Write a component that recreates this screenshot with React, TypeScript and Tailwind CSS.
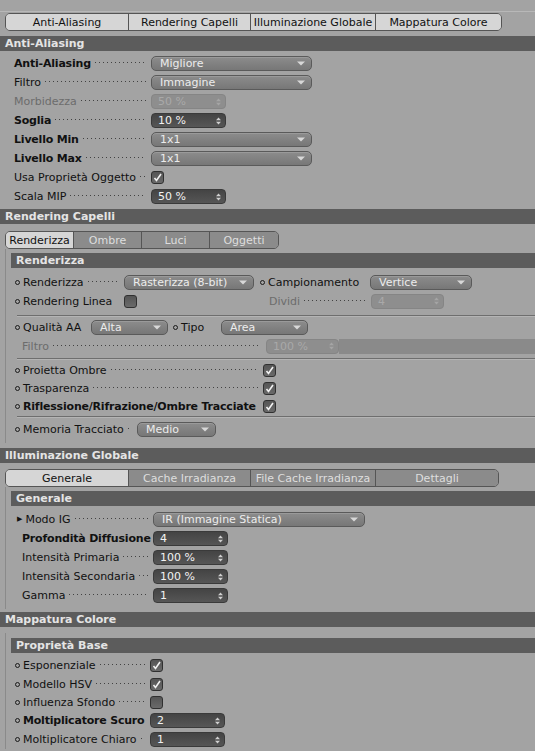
import React from "react";

function Bullet() {
  return <span className="inline-block w-[5px] h-[5px] rounded-full border border-[#1a1a1a] mr-[3px] shrink-0" />;
}

function Label({
  text,
  width,
  bold,
  disabled,
  bullet,
  arrow,
  dots = true,
  pl = "pl-[14px]",
}: {
  text: string;
  width: string;
  bold?: boolean;
  disabled?: boolean;
  bullet?: boolean;
  arrow?: boolean;
  dots?: boolean;
  pl?: string;
}) {
  return (
    <div className={`flex items-center shrink-0 min-w-0 ${width} ${pl} pr-[5px]`}>
      {bullet && <Bullet />}
      {arrow && <span className="text-[7px] leading-none text-[#111] mr-[3px]">▶</span>}
      <span
        className={`whitespace-nowrap ${bold ? "font-bold tracking-[-0.2px]" : ""} ${
          disabled ? "text-[#6c6c6c]" : "text-[#111]"
        }`}
      >
        {text}
      </span>
      {dots && (
        <span className="flex-1 self-end mb-[5px] ml-[4px] h-[2px] bg-[linear-gradient(to_right,#2a2a2a_0,#2a2a2a_1px,transparent_1px)] bg-[length:4px_1px] bg-repeat-x opacity-80" />
      )}
    </div>
  );
}

function Drop({ text, width, disabled }: { text: string; width: string; disabled?: boolean }) {
  return (
    <div
      className={`${width} h-[15px] shrink-0 rounded-[5px] border border-[#5a5a5a] bg-gradient-to-b from-[#8c8c8c] to-[#777777] flex items-center justify-between pl-[8px] shadow-[inset_0_1px_0_#9a9a9a]`}
    >
      <span className={`whitespace-nowrap leading-none ${disabled ? "text-[#aaa]" : "text-[#ececec]"}`}>{text}</span>
      <svg width="8" height="5" viewBox="0 0 8 5" className="mr-[6px] shrink-0">
        <path d="M0 0.5 H8 L4 4.5 Z" fill="#d8d8d8" />
      </svg>
    </div>
  );
}

function Num({ text, width = "w-[75px]", disabled }: { text: string; width?: string; disabled?: boolean }) {
  return (
    <div
      className={`${width} h-[15px] shrink-0 rounded-[4px] border flex items-center justify-between pl-[6px] ${
        disabled ? "bg-[#8e8e8e] border-[#858585]" : "bg-gradient-to-b from-[#444] to-[#565656] border-[#3a3a3a]"
      }`}
    >
      <span className={`whitespace-nowrap leading-none ${disabled ? "text-[#a9a9a9]" : "text-[#f2f2f2]"}`}>
        {text}
      </span>
      <svg width="5" height="8" viewBox="0 0 5 8" className="mr-[4px] shrink-0">
        <path d="M0 3.2 L2.5 0.5 L5 3.2 Z M0 4.8 L2.5 7.5 L5 4.8 Z" fill={disabled ? "#a5a5a5" : "#d0d0d0"} />
      </svg>
    </div>
  );
}

function Check({ on }: { on?: boolean }) {
  return (
    <div className="w-[13px] h-[13px] shrink-0 rounded-[3px] border border-[#303030] bg-gradient-to-b from-[#555] to-[#6a6a6a] flex items-center justify-center">
      {on && (
        <svg width="9" height="9" viewBox="0 0 9 9">
          <path d="M1.5 5 L3.5 7.5 L8 1" stroke="#f2f2f2" strokeWidth="1.6" fill="none" />
        </svg>
      )}
    </div>
  );
}

function Row({ children, h = "h-[19px]" }: { children: React.ReactNode; h?: string }) {
  return <div className={`flex items-center ${h}`}>{children}</div>;
}

function Header({ text }: { text: string }) {
  return <div className="h-[15px] bg-[#5c5c5c] text-[#e4e4e4] font-bold flex items-center pl-[5px]">{text}</div>;
}

function Sep() {
  return <div className="h-[2px] border-t border-[#6e6e6e] border-b-[#b4b4b4] border-b ml-[6px]" />;
}

function Tabs({
  items,
  active,
  widths,
  outer,
}: {
  items: string[];
  active: number;
  widths: string[];
  outer?: boolean;
}) {
  return (
    <div className="flex ml-[5px]">
      <div className="flex h-[18px] rounded-[5px] border border-[#555] overflow-hidden">
        {items.map((t, i) => (
          <div
            key={t}
            className={`${widths[i]} flex items-center justify-center ${i < items.length - 1 ? "border-r border-[#555]" : ""} ${
              outer || i === active ? "bg-[#d6d6d6] text-[#111]" : "bg-[#8b8b8b] text-[#dedede]"
            }`}
          >
            {t}
          </div>
        ))}
      </div>
    </div>
  );
}

export default function App() {
  return (
    <div className="w-[535px] h-[751px] overflow-hidden bg-[#a3a3a3] text-[11px] leading-none font-['DejaVu_Sans',sans-serif]">
      <div className="h-[11px]" />
      <div className="border-t border-[#b8b8b8] pt-[1px]">
        <Tabs
          outer
          items={["Anti-Aliasing", "Rendering Capelli", "Illuminazione Globale", "Mappatura Colore"]}
          active={0}
          widths={["w-[123px]", "w-[122px]", "w-[125px]", "w-[125px]"]}
        />
      </div>
      <div className="h-[5px]" />

      <Header text="Anti-Aliasing" />
      <div className="pt-[3px]">
        <Row>
          <Label text="Anti-Aliasing" bold width="w-[151px]" />
          <Drop text="Migliore" width="w-[161px]" />
        </Row>
        <Row>
          <Label text="Filtro" width="w-[151px]" />
          <Drop text="Immagine" width="w-[161px]" />
        </Row>
        <Row>
          <Label text="Morbidezza" disabled width="w-[151px]" />
          <Num text="50 %" disabled />
        </Row>
        <Row>
          <Label text="Soglia" bold width="w-[151px]" />
          <Num text="10 %" />
        </Row>
        <Row>
          <Label text="Livello Min" bold width="w-[151px]" />
          <Drop text="1x1" width="w-[161px]" />
        </Row>
        <Row>
          <Label text="Livello Max" bold width="w-[151px]" />
          <Drop text="1x1" width="w-[161px]" />
        </Row>
        <Row>
          <Label text="Usa Proprietà Oggetto" width="w-[151px]" />
          <Check on />
        </Row>
        <Row>
          <Label text="Scala MIP" width="w-[151px]" />
          <Num text="50 %" />
        </Row>
      </div>
      <div className="h-[3px]" />

      <Header text="Rendering Capelli" />
      <div className="h-[7px]" />
      <Tabs items={["Renderizza", "Ombre", "Luci", "Oggetti"]} active={0} widths={["w-[68px]", "w-[68px]", "w-[68px]", "w-[68px]"]} />
      <div className="ml-[5px] border-l border-[#8a8a8a] pl-[5px] pt-[4px] pb-[4px]">
        <Header text="Renderizza" />
        <div className="pt-[5px]">
          <Row>
            <Label text="Renderizza" bullet width="w-[113px]" pl="pl-[4px]" />
            <Drop text="Rasterizza (8-bit)" width="w-[130px]" />
            <div className="w-[6px]" />
            <Label text="Campionamento" bullet dots={false} width="w-[110px]" pl="pl-[0px]" />
            <Drop text="Vertice" width="w-[102px]" />
          </Row>
          <Row h="h-[18px]">
            <Label text="Rendering Linea" bullet dots={false} width="w-[113px]" pl="pl-[4px]" />
            <Check />
            <div className="w-[132px]" />
            <Label text="Dividi" disabled width="w-[102px]" pl="pl-[0px]" />
            <Num text="4" width="w-[73px]" disabled />
          </Row>
          <div className="h-[5px]" />
          <Sep />
          <div className="h-[1px]" />
          <Row>
            <Label text="Qualità AA" bullet dots={false} width="w-[80px]" pl="pl-[4px]" />
            <Drop text="Alta" width="w-[77px]" />
            <div className="w-[5px]" />
            <Label text="Tipo" bullet dots={false} width="w-[48px]" pl="pl-[0px]" />
            <Drop text="Area" width="w-[87px]" />
          </Row>
          <Row h="h-[18px]">
            <Label text="Filtro" disabled width="w-[255px]" pl="pl-[11px]" />
            <Num text="100 %" width="w-[73px]" disabled />
            <div className="flex-1 h-[15px] bg-[#8a8a8a]" />
          </Row>
          <div className="h-[3px]" />
          <Sep />
          <div className="h-[1px]" />
          <Row h="h-[18px]">
            <Label text="Proietta Ombre" bullet width="w-[252px]" pl="pl-[4px]" />
            <Check on />
          </Row>
          <Row h="h-[18px]">
            <Label text="Trasparenza" bullet width="w-[252px]" pl="pl-[4px]" />
            <Check on />
          </Row>
          <Row h="h-[18px]">
            <Label text="Riflessione/Rifrazione/Ombre Tracciate" bold bullet dots={false} width="w-[252px]" pl="pl-[4px]" />
            <Check on />
          </Row>
          <div className="h-[1px]" />
          <Sep />
          <div className="h-[2px]" />
          <Row>
            <Label text="Memoria Tracciato" bullet width="w-[126px]" pl="pl-[4px]" />
            <Drop text="Medio" width="w-[79px]" />
          </Row>
        </div>
      </div>
      <div className="h-[5px]" />

      <Header text="Illuminazione Globale" />
      <div className="h-[6px]" />
      <Tabs
        items={["Generale", "Cache Irradianza", "File Cache Irradianza", "Dettagli"]}
        active={0}
        widths={["w-[123px]", "w-[122px]", "w-[125px]", "w-[122px]"]}
      />
      <div className="ml-[5px] border-l border-[#8a8a8a] pl-[5px] pt-[4px] pb-[4px]">
        <Header text="Generale" />
        <div className="pt-[4px]">
          <Row>
            <Label text="Modo IG" arrow width="w-[142px]" pl="pl-[6px]" />
            <Drop text="IR (Immagine Statica)" width="w-[212px]" />
          </Row>
          <Row>
            <Label text="Profondità Diffusione" bold dots={false} width="w-[142px]" pl="pl-[11px]" />
            <Num text="4" />
          </Row>
          <Row>
            <Label text="Intensità Primaria" width="w-[142px]" pl="pl-[11px]" />
            <Num text="100 %" />
          </Row>
          <Row>
            <Label text="Intensità Secondaria" width="w-[142px]" pl="pl-[11px]" />
            <Num text="100 %" />
          </Row>
          <Row>
            <Label text="Gamma" width="w-[142px]" pl="pl-[11px]" />
            <Num text="1" />
          </Row>
        </div>
      </div>
      <div className="h-[3px]" />

      <Header text="Mappatura Colore" />
      <div className="h-[6px]" />
      <div className="ml-[5px] border-l border-[#8a8a8a] pl-[5px] pt-[5px]">
        <Header text="Proprietà Base" />
        <div className="pt-[3px]">
          <Row>
            <Label text="Esponenziale" bullet width="w-[139px]" pl="pl-[4px]" />
            <Check on />
          </Row>
          <Row h="h-[18px]">
            <Label text="Modello HSV" bullet width="w-[139px]" pl="pl-[4px]" />
            <Check on />
          </Row>
          <Row h="h-[18px]">
            <Label text="Influenza Sfondo" bullet width="w-[139px]" pl="pl-[4px]" />
            <Check />
          </Row>
          <Row>
            <Label text="Moltiplicatore Scuro" bold bullet dots={false} width="w-[139px]" pl="pl-[4px]" />
            <Num text="2" />
          </Row>
          <Row>
            <Label text="Moltiplicatore Chiaro" bullet width="w-[139px]" pl="pl-[4px]" />
            <Num text="1" />
          </Row>
        </div>
      </div>
    </div>
  );
}
